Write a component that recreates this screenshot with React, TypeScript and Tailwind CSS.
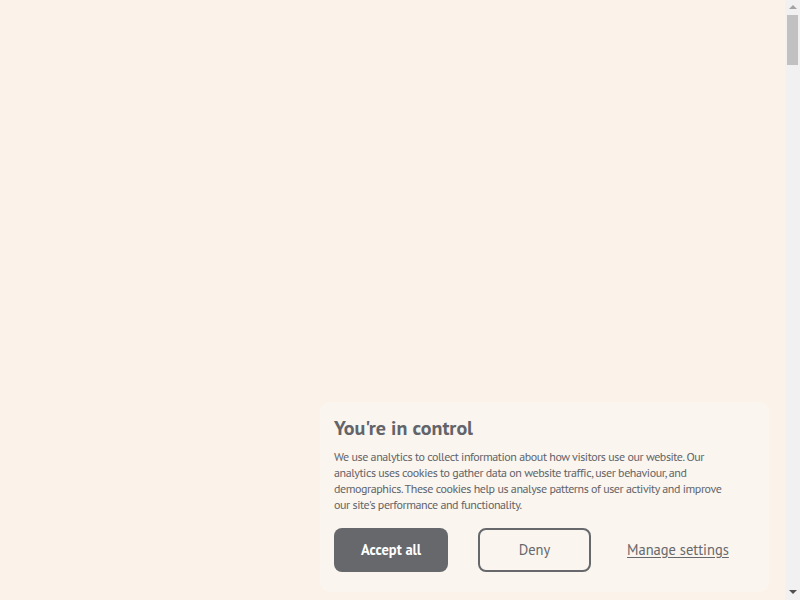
const FONT = "font-['PT_Sans','Liberation_Sans_Narrow','DejaVu_Sans_Condensed',sans-serif]";

function CookieBanner() {
  return (
    <div
      className={`absolute bottom-[8px] right-[16px] w-[449px] rounded-[10px] bg-[#faf5ef] px-[14px] pb-[20px] pt-[12px] text-[#626469] ${FONT}`}
    >
      <h2 className="text-[20px] font-bold leading-[28px]">You're in control</h2>
      <p className="mt-[7px] max-w-[398px] text-[12px] leading-[16px] tracking-[-0.42px]">
        We use analytics to collect information about how visitors use our website. Our analytics uses
        cookies to gather data on website traffic, user behaviour, and demographics. These cookies help us
        analyse patterns of user activity and improve our site's performance and functionality.
      </p>
      <div className="mt-[15px] flex items-center gap-[30px]">
        <button className="h-[44px] w-[114px] rounded-[8px] bg-[#66686c] text-[14.5px] font-bold text-white">
          Accept all
        </button>
        <button className="h-[44px] w-[113px] rounded-[8px] border-2 border-[#66686c] text-[14.5px] text-[#66686c]">
          Deny
        </button>
        <a href="#" className="ml-[6px] text-[14.5px] text-[#66686c] underline underline-offset-2">
          Manage settings
        </a>
      </div>
    </div>
  );
}

function Scrollbar() {
  return (
    <div className="flex w-[15px] flex-col items-center bg-[#f1f1f1]">
      <div className="mt-[5px] h-0 w-0 border-x-[4px] border-b-[4px] border-x-transparent border-b-[#a3a3a3]" />
      <div className="mt-[6px] h-[50px] w-[11px] bg-[#c1c1c1]" />
      <div className="flex-1" />
      <div className="mb-[6px] h-0 w-0 border-x-[4px] border-t-[4px] border-x-transparent border-t-[#505050]" />
    </div>
  );
}

export default function App() {
  return (
    <div className="flex h-[600px] w-[800px] overflow-hidden bg-[#fbf2e9]">
      <main className="relative flex-1">
        <CookieBanner />
      </main>
      <Scrollbar />
    </div>
  );
}
